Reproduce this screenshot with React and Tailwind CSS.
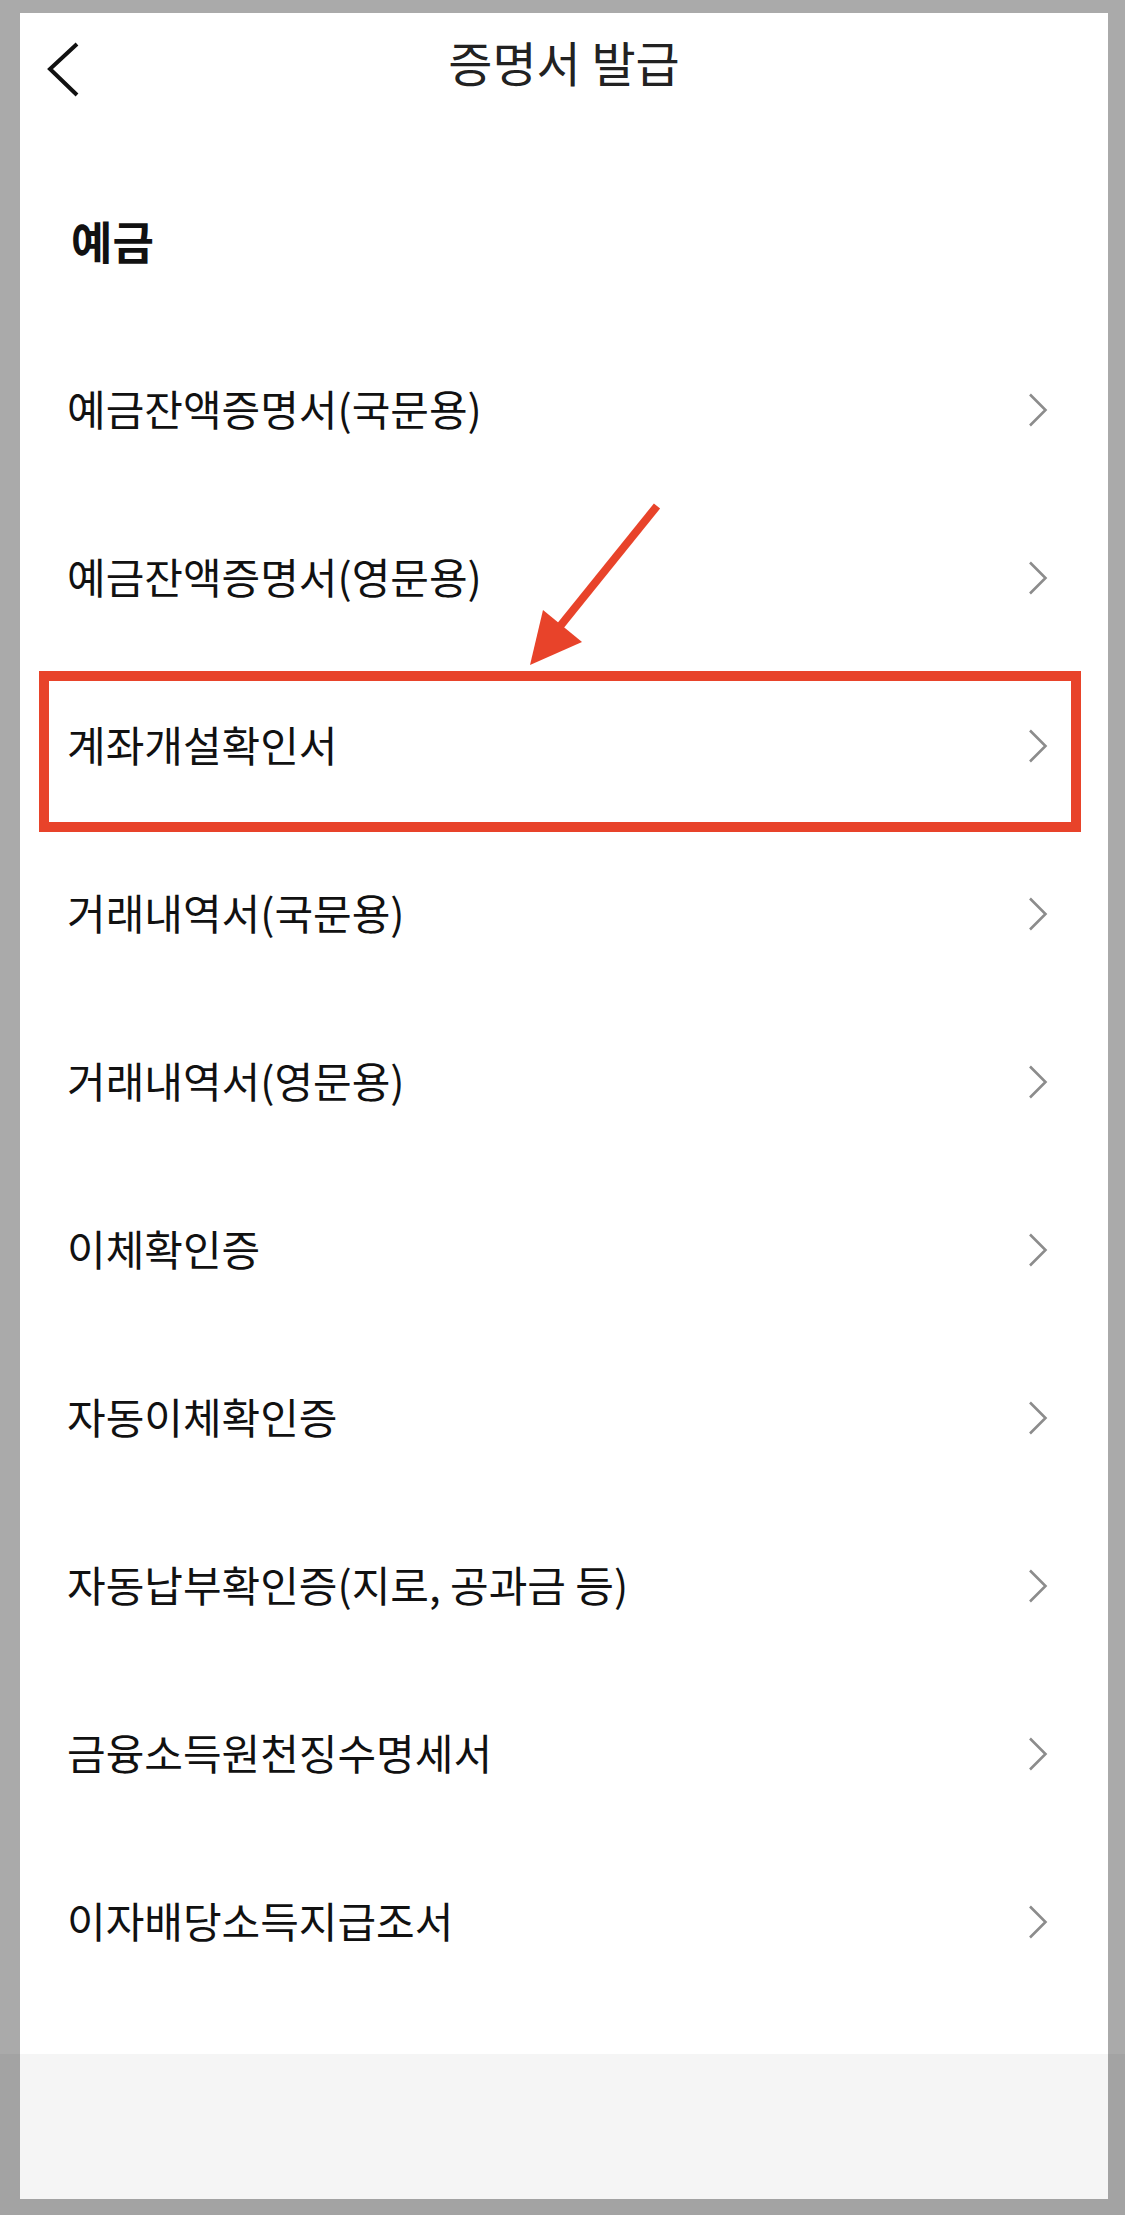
const items = [
  "예금잔액증명서(국문용)",
  "예금잔액증명서(영문용)",
  "계좌개설확인서",
  "거래내역서(국문용)",
  "거래내역서(영문용)",
  "이체확인증",
  "자동이체확인증",
  "자동납부확인증(지로, 공과금 등)",
  "금융소득원천징수명세서",
  "이자배당소득지급조서",
];

function RowArrow() {
  return (
    <svg width="20" height="34" viewBox="0 0 20 34" fill="none">
      <path d="M2 1.5 L17.5 17 L2 32.5" stroke="#8c8c8c" strokeWidth="2.6" />
    </svg>
  );
}

export default function App() {
  return (
    <div
      className="relative w-[1125px] h-[2215px] bg-[#aaaaaa] pt-[13px] pl-[20px] pr-[17px] pb-[16px]"
      style={{ fontFamily: '"Noto Sans CJK KR", "Noto Sans", sans-serif' }}
    >
      {/* darker frame next to bottom sheet */}
      <div className="absolute left-0 right-0 bottom-0 h-[161px] bg-[#a3a3a3]" />

      <div className="relative flex flex-col h-full bg-white">
        {/* header */}
        <div className="relative h-[104px] flex items-center justify-center shrink-0">
          <svg
            className="absolute left-[26px] top-[29px]"
            width="34"
            height="56"
            viewBox="0 0 34 56"
            fill="none"
          >
            <path d="M31 2 L4 27 L31 53" stroke="#111" strokeWidth="4" />
          </svg>
          <span className="text-[48px] leading-[52px] text-[#222] mb-[8px]">증명서 발급</span>
        </div>

        {/* section title */}
        <div className="h-[209px] pt-[100px] pl-[51px] shrink-0">
          <h2 className="text-[45px] leading-[48px] font-bold text-[#111]">예금</h2>
        </div>

        {/* list */}
        <ul>
          {items.map(label => (
            <li
              key={label}
              className="h-[168px] flex items-center justify-between pl-[47px] pr-[60px]"
            >
              <span className="text-[42px] leading-[48px] text-[#111] pb-[5px]">{label}</span>
              <RowArrow />
            </li>
          ))}
        </ul>

        <div className="flex-1 bg-white" />
        <div className="h-[145px] bg-[#f5f5f5] shrink-0" />
      </div>

      {/* annotation: highlight box */}
      <div className="absolute left-[39px] top-[671px] w-[1042px] h-[161px] border-[10px] border-[#e8432a]" />

      {/* annotation: arrow */}
      <svg
        className="absolute left-0 top-0 pointer-events-none"
        width="1125"
        height="2215"
        viewBox="0 0 1125 2215"
        fill="none"
      >
        <line x1="657" y1="506" x2="557" y2="630" stroke="#e8432a" strokeWidth="8" />
        <polygon points="530,665 543,610 582,642" fill="#e8432a" />
      </svg>
    </div>
  );
}
